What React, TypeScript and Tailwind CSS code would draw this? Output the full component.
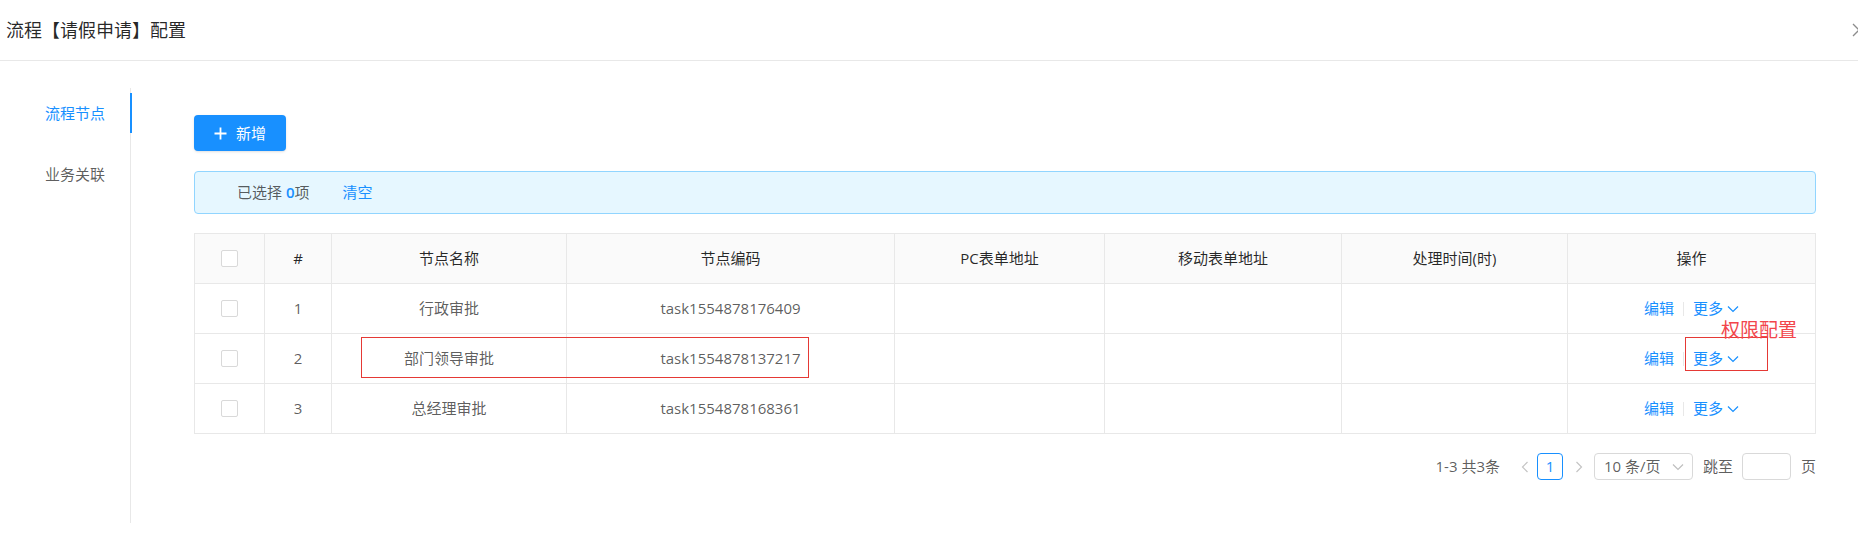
const rows = [
    { no: 1, name: "行政审批", code: "task1554878176409" },
    { no: 2, name: "部门领导审批", code: "task1554878137217" },
    { no: 3, name: "总经理审批", code: "task1554878168361" },
];

const headers = ["#", "节点名称", "节点编码", "PC表单地址", "移动表单地址", "处理时间(时)", "操作"];

function Checkbox() {
    return <span className="inline-block w-[17px] h-[17px] rounded-[2px] border border-[#d9d9d9] bg-white" />;
}

function Down({ className }: { className?: string }) {
    return (
        <svg width="12" height="8" viewBox="0 0 12 8" fill="none" className={className}>
            <path d="M1 1.5L6 6.5L11 1.5" stroke="currentColor" strokeWidth="1.2" />
        </svg>
    );
}

function Side({ dir }: { dir: "left" | "right" }) {
    return (
        <svg width="8" height="12" viewBox="0 0 8 12" fill="none" className="text-[#c4c4c4]">
            <path d={dir === "left" ? "M6.5 1L1.5 6L6.5 11" : "M1.5 1L6.5 6L1.5 11"} stroke="currentColor" strokeWidth="1.2" />
        </svg>
    );
}

export default function App() {
    return (
        <div
            className="relative w-[1858px] h-[545px] overflow-hidden bg-white text-[15px] text-[rgba(0,0,0,0.65)]"
            style={{ fontFamily: '"Open Sans", "Noto Sans CJK SC", sans-serif' }}
        >
            {/* Header */}
            <div className="flex items-center h-[61px] border-b border-[#e8e8e8] pl-[6px]">
                <h2 className="text-[18px] text-[rgba(0,0,0,0.85)]">流程【请假申请】配置</h2>
                <svg width="14" height="14" viewBox="0 0 14 14" className="ml-auto mr-[-8px] text-[#8c8c8c]">
                    <path d="M1 1L13 13M13 1L1 13" stroke="currentColor" strokeWidth="1.3" />
                </svg>
            </div>

            {/* Body */}
            <div className="flex pt-[27px]">
                {/* Side tabs */}
                <div className="w-[131px] h-[435px] border-r border-[#e8e8e8] pt-[5px]">
                    <div className="relative h-[40px] leading-[40px] text-right pr-[25px] text-[#1890ff]">
                        流程节点
                        <span className="absolute right-[-2px] top-0 w-[2px] h-[40px] bg-[#1890ff]" />
                    </div>
                    <div className="h-[40px] leading-[40px] text-right pr-[25px] mt-[21px] text-[rgba(0,0,0,0.65)]">
                        业务关联
                    </div>
                </div>

                {/* Content */}
                <div className="w-[1622px] ml-[63px] pt-[27px]">
                    <button className="flex items-center justify-center gap-[9px] w-[92px] h-[36px] rounded-[4px] bg-[#1890ff] text-white shadow-sm">
                        <svg width="13" height="13" viewBox="0 0 13 13">
                            <path d="M6.5 0.5V12.5M0.5 6.5H12.5" stroke="currentColor" strokeWidth="1.8" />
                        </svg>
                        <span>新增</span>
                    </button>

                    {/* Selection info */}
                    <div className="flex items-center mt-[20px] h-[43px] rounded-[4px] border border-[#91d5ff] bg-[#e6f7ff] pl-[42px]">
                        <span className="text-[rgba(0,0,0,0.65)]">
                            已选择 <span className="font-semibold text-[#1890ff]">0</span>项
                        </span>
                        <span className="ml-[33px] text-[#1890ff]">清空</span>
                    </div>

                    {/* Table */}
                    <div className="mt-[19px] border-l border-t border-[#e8e8e8] grid grid-cols-[70px_67px_235px_328px_210px_237px_226px_248px]">
                        <div className="h-[50px] flex items-center justify-center bg-[#fafafa] border-r border-b border-[#e8e8e8]">
                            <Checkbox />
                        </div>
                        {headers.map((h) => (
                            <div
                                key={h}
                                className="h-[50px] flex items-center justify-center bg-[#fafafa] border-r border-b border-[#e8e8e8] text-[rgba(0,0,0,0.85)]"
                            >
                                {h}
                            </div>
                        ))}
                        {rows.map((r) => (
                            <div key={r.no} className="contents">
                                <div className="h-[50px] flex items-center justify-center border-r border-b border-[#e8e8e8]">
                                    <Checkbox />
                                </div>
                                <div className="h-[50px] flex items-center justify-center border-r border-b border-[#e8e8e8]">{r.no}</div>
                                <div className="h-[50px] flex items-center justify-center border-r border-b border-[#e8e8e8]">{r.name}</div>
                                <div className="h-[50px] flex items-center justify-center border-r border-b border-[#e8e8e8]">{r.code}</div>
                                <div className="h-[50px] border-r border-b border-[#e8e8e8]" />
                                <div className="h-[50px] border-r border-b border-[#e8e8e8]" />
                                <div className="h-[50px] border-r border-b border-[#e8e8e8]" />
                                <div className="h-[50px] flex items-center justify-center border-r border-b border-[#e8e8e8] text-[#1890ff]">
                                    <span>编辑</span>
                                    <span className="mx-[9px] w-px h-[14px] bg-[#e8e8e8]" />
                                    <span>更多</span>
                                    <Down className="ml-[4px] mt-[1px]" />
                                </div>
                            </div>
                        ))}
                    </div>

                    {/* Pagination */}
                    <div className="flex items-center justify-end mt-[19px] h-[27px]">
                        <span>1-3 共3条</span>
                        <span className="ml-[21px]">
                            <Side dir="left" />
                        </span>
                        <span className="ml-[8px] w-[26px] h-[27px] flex items-center justify-center rounded-[4px] border border-[#1890ff] text-[#1890ff]">
                            1
                        </span>
                        <span className="ml-[12px]">
                            <Side dir="right" />
                        </span>
                        <span className="ml-[11px] w-[99px] h-[27px] flex items-center justify-between pl-[9px] pr-[8px] rounded-[4px] border border-[#d9d9d9]">
                            <span>10 条/页</span>
                            <Down className="text-[#bfbfbf]" />
                        </span>
                        <span className="ml-[10px]">跳至</span>
                        <span className="ml-[9px] w-[49px] h-[27px] rounded-[4px] border border-[#d9d9d9]" />
                        <span className="ml-[10px]">页</span>
                    </div>
                </div>
            </div>

            {/* Red annotations */}
            <div className="absolute left-[361px] top-[337px] w-[448px] h-[41px] border border-[#e53935]" />
            <div className="absolute left-[1685px] top-[337px] w-[83px] h-[34px] border border-[#e53935]" />
            <div className="absolute left-[1721px] top-[319px] text-[19px] leading-[22px] text-[#f2464b]">权限配置</div>
        </div>
    );
}
